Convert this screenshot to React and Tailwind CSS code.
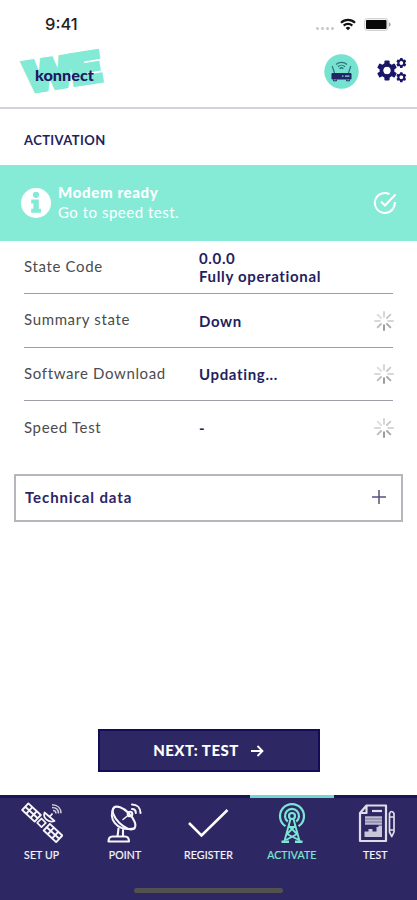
import React from "react";

function Logo() {
  return (
    <svg className="block overflow-visible" width="90" height="56" viewBox="0 0 90 56">
      <g fill="#83ead6" stroke="#83ead6" strokeWidth="3.500" fontFamily="Inter, sans-serif" fontWeight="900" fontSize="42">
        <text transform="translate(8 45) rotate(-9)" textLength="51" lengthAdjust="spacingAndGlyphs">W</text>
        <text transform="translate(55 37.500) rotate(-9)" textLength="31" lengthAdjust="spacingAndGlyphs">E</text>
      </g>
      <text x="17" y="32.500" fill="#1c1760" fontFamily="Lato, sans-serif" fontWeight="900" fontSize="15" textLength="59" lengthAdjust="spacingAndGlyphs">konnect</text>
    </svg>
  );
}

function Wifi() {
  return (
    <svg width="16" height="13" viewBox="0 0 16 13" fill="none" stroke="#111" strokeWidth="2.2">
      <path d="M1 4.700a10 10 0 0 1 14 0M3.700 7.600a6.200 6.200 0 0 1 8.600 0" />
      <path d="M8 12.300 5.600 9.900a3.400 3.400 0 0 1 4.800 0z" fill="#111" stroke="none" />
    </svg>
  );
}

function Battery() {
  return (
    <svg width="27" height="13" viewBox="0 0 27 13">
      <rect x=".5" y=".5" width="23.500" height="12" rx="3" fill="#f4f4f4" stroke="#d0d0d0" />
      <rect x="2" y="2" width="20.500" height="9" rx="1" fill="#080808" />
      <path d="M25 4.500c2 .6 2 3.400 0 4z" fill="#999" />
    </svg>
  );
}

function Router() {
  return (
    <svg width="35" height="35" viewBox="0 0 35 35" fill="none">
      <circle cx="17.500" cy="17.500" r="17.200" fill="#75e3d0" />
      <rect x="7.500" y="19" width="20" height="6.500" rx="1.200" fill="#252466" />
      <path d="M9.500 25.500v1.300h3v-1.300M22.500 25.500v1.300h3v-1.300" stroke="#252466" />
      <path d="M18 22.200h1.500M21 22.200h4.500" stroke="#75e3d0" strokeWidth="1.300" />
      <path d="M10.500 19 8.200 12M24.500 19l2.300-7M12 10.500a8 8 0 0 1 11 0M13.900 12.700a5.200 5.200 0 0 1 7.200 0M15.600 14.700a2.700 2.700 0 0 1 3.800 0" stroke="#2f7280" strokeWidth="1.200" />
    </svg>
  );
}

function Gear({ x, y, s, hole }) {
  return (
    <g transform={`translate(${x} ${y}) scale(${s})`}>
      {[0, 60, 120, 180, 240, 300].map((a) => (
        <rect key={a} x="-2.600" y="-10" width="5.200" height="6" rx="1" fill="#191568" transform={`rotate(${a})`} />
      ))}
      <circle r={hole + 1.800} fill="none" stroke="#191568" strokeWidth="3.800" />
    </g>
  );
}

function Gears() {
  return (
    <svg className="-mt-[3px]" width="30" height="26" viewBox="0 0 30 26">
      <Gear x={10} y={13.500} s={1} hole={3.800} />
      <Gear x={24.300} y={6} s={0.5} hole={4.200} />
      <Gear x={24.300} y={20.300} s={0.5} hole={4.200} />
    </svg>
  );
}

function Spinner() {
  const shades = ["#d4d4d4", "#c9c9c9", "#d6d6d6", "#a9a9a9", "#989898", "#bdbdbd", "#d8d8d8", "#dedede"];
  return (
    <svg className="-mr-[1px] block" width="20" height="20" viewBox="-10 -10 20 20">
      {shades.map((c, i) => (
        <path key={i} d="M0-4.200V-9" stroke={c} strokeWidth="1.900" strokeLinecap="round" transform={`rotate(${i * 45})`} />
      ))}
    </svg>
  );
}

function InfoIcon() {
  return (
    <svg className="block" width="30" height="30" viewBox="0 0 30 30">
      <circle cx="15" cy="15" r="15" fill="#fff" />
      <circle cx="15" cy="6.800" r="3.100" fill="#83ead6" />
      <path d="M10.200 11.500h7.600v9.300h2.200v3.900H10.200v-3.900h2.200v-5.400h-2.200z" fill="#83ead6" />
    </svg>
  );
}

function CheckCircle() {
  return (
    <svg className="block" width="24" height="24" viewBox="0 0 24 24" fill="none" stroke="#fff" strokeWidth="2">
      <path d="M16.500 3.100A10 10 0 1 0 21.800 11" />
      <path d="m8 10.500 4 4L22.500 3.500" />
    </svg>
  );
}

function Panel({ x, y }) {
  return (
    <g transform={`translate(${x} ${y}) rotate(43)`} strokeWidth="1.900">
      <path d="M-8.500-4.500h17v9h-17zM-8.500 0h17M-3-4.500v9M3-4.500v9" />
    </g>
  );
}

function Satellite() {
  return (
    <svg width="42" height="42" viewBox="0 0 42 42" fill="none" stroke="#f5f5fa" strokeWidth="1.700" strokeLinejoin="round">
      <Panel x={10.500} y={10.500} />
      <Panel x={32} y={31} />
      <path d="m20.500 16.500 4.300 4.300-4.300 4.300-4.300-4.300z" />
      <path d="M23.500 10.500c-2 6 4.500 10.500 10 8.500zM28.500 15l3-3.500" />
      <path d="M32 8.500c2 0 3 1.300 3 3M31 5.500c4.300 0 6.500 2.500 6.500 6M31 2.800c5.700 0 9 3.600 9 8.500" strokeWidth="1.600" stroke="#c9c7d8" />
    </svg>
  );
}

function Dish() {
  return (
    <svg width="42" height="42" viewBox="0 0 42 42" fill="none" stroke="#f5f5fa" strokeWidth="2.100" strokeLinejoin="round" strokeLinecap="round">
      <path d="M10 5.500C3.500 16 12 29.500 30.500 26.500" />
      <ellipse cx="20" cy="16" rx="14.500" ry="6.800" transform="rotate(45 20 16)" />
      <path d="m19 17.500 5-4" strokeWidth="1.500" />
      <circle cx="26" cy="12" r="2.300" />
      <path d="M28 7c2.500 0 3.800 1.700 3.800 4M28 2.500c5.200 0 8.500 3.500 8.500 8.500" />
      <path d="m14.500 26.500-1 8M19 28v6.500M4.500 39.500c0-3.200 1.500-5 4-5H21c2.500 0 4 1.800 4 5z" />
    </svg>
  );
}

function Check() {
  return (
    <svg width="42" height="42" viewBox="0 0 42 42" fill="none" stroke="#fff" strokeWidth="2.500">
      <path d="m2 21 12.500 12.500L40.500 8" />
    </svg>
  );
}

function Tower() {
  return (
    <svg width="42" height="42" viewBox="0 0 42 42" fill="none" stroke="#7ce5d4" strokeWidth="2.200">
      <circle cx="21" cy="14" r="3" />
      <path d="M16.800 19.500a7 7 0 1 1 8.400 0M14.500 24.200a12 12 0 1 1 13 0" />
      <path d="m19.500 17-6 22M22.500 17l6 22M17.500 25h7M18 24l8 8-11 6M24 24l-8 8 12 6" strokeWidth="1.900" />
      <path d="M10.500 39.700h7.500M24 39.700h7.500" strokeWidth="2.600" />
    </svg>
  );
}

function Report() {
  return (
    <svg width="42" height="42" viewBox="0 0 42 42" fill="none" stroke="#dddce8" strokeWidth="2.200" strokeLinejoin="round">
      <path d="M12.500 3.500H32V39H6V11zM12.500 3.500V11H6" />
      <path d="M18 9h10" />
      <path d="M11 15.500h17M11 18.500h17M11 21.500h17" strokeWidth="2.300" stroke="#bbb9ce" />
      <path d="M10.500 35V29.500h4V27h4v2.500h4V25h2v-1.500h3.500V35z" fill="#c8c6d8" stroke="none" />
      <path d="M35.500 11.500q2-4 4.500 0V30l-2.200 4.500-2.300-4.500zM35.500 15H40M35.500 28H40" strokeWidth="1.700" />
    </svg>
  );
}

function Row({ label, children, loading, className }) {
  return (
    <div className={`flex items-center border-[#9f9da9] ${className}`}>
      <div className="-mt-[2px] w-[175px] whitespace-nowrap text-[15px] tracking-[0.65px] text-[#4b4b50]">{label}</div>
      <div className="flex-1 whitespace-nowrap text-[15px] font-bold leading-[18px] tracking-[0.65px] text-[#241e60]">{children}</div>
      {loading && <Spinner />}
    </div>
  );
}

function NavItem({ icon, label, active }) {
  return (
    <div className={`flex w-1/5 flex-col items-center border-t-[3px] pt-[4px] text-[10.500px] ${active ? "border-[#6fd9ce] text-[#7ce5d4]" : "border-[#1b1656] text-[#f5f5fa]"}`}>
      {icon}
      <span className="mt-[4px] whitespace-nowrap leading-[14px] tracking-[0.15px] [-webkit-text-stroke:0.2px_currentColor]">{label}</span>
    </div>
  );
}

export default function App() {
  return (
    <div className="flex h-[900px] w-[417px] flex-col overflow-hidden bg-white font-['Lato',sans-serif]">
      <header className="h-[109px] shrink-0 border-b-2 border-[#d3d2da]">
        <div className="flex h-12 items-center justify-between pl-[45px] pr-[26px]">
          <span className="font-['Inter',sans-serif] text-[16.500px] font-medium text-[#222]">9:41</span>
          <div className="flex items-center">
            <div className="mr-[6px] mt-[9px] flex gap-[2px]">
              {[0, 1, 2, 3].map((n) => <i key={n} className="size-[3px] rounded-full bg-[#c8c8c8]" />)}
            </div>
            <Wifi />
            <div className="ml-[8px]"><Battery /></div>
          </div>
        </div>
        <div className="flex items-start justify-between pl-[18px] pr-[10px]">
          <Logo />
          <div className="mt-[6px] flex items-center gap-[18px]">
            <Router />
            <Gears />
          </div>
        </div>
      </header>
      <h1 className="flex h-[56px] shrink-0 items-center pl-6 pt-[7px] text-[13px] font-bold tracking-[0.4px] text-[#241e60]">ACTIVATION</h1>
      <section className="flex h-[76px] shrink-0 items-center bg-[#85ebd7] pl-[21px] pr-[20px] text-white">
        <InfoIcon />
        <div className="-mt-[3px] ml-[7px] flex-1 text-[15px] leading-[20px]">
          <div className="font-black tracking-[0.65px]">Modem ready</div>
          <div className="tracking-[0.5px]">Go to speed test.</div>
        </div>
        <CheckCircle />
      </section>
      <section className="px-6">
        <Row label="State Code" className="h-[53px] border-b">0.0.0<br />Fully operational</Row>
        <Row label="Summary state" loading className="h-[54px] border-b">Down</Row>
        <Row label="Software Download" loading className="h-[53px] border-b">Updating...</Row>
        <Row label="Speed Test" loading className="h-[54px]">-</Row>
      </section>
      <button className="mx-[14px] mt-[19px] flex h-[48px] shrink-0 items-center justify-between border-2 border-[#b7b6bc] pb-[2px] pl-[9px] pr-[15px] text-[15px] font-bold text-[#2b2665]">
        <span className="tracking-[0.9px]">Technical data</span>
        <svg width="14" height="14" viewBox="0 0 14 14" stroke="#55517f" strokeWidth="1.500"><path d="M7 0v14M0 7h14" /></svg>
      </button>
      <button className="mx-auto mt-auto flex h-[43px] w-[222px] shrink-0 items-center justify-center gap-[12px] border-2 border-[#130c58] bg-[#2d2864] text-[15px] font-black text-white">
        <span className="tracking-[0.5px]">NEXT: TEST</span>
        <svg width="13" height="12" viewBox="0 0 13 12" fill="none" stroke="#fff" strokeWidth="1.800"><path d="M0 6h11.500M6.500 1l5 5-5 5" /></svg>
      </button>
      <nav className="mt-[23px] h-[105px] shrink-0 bg-[#2d2864]">
        <div className="flex h-[93px]">
          <NavItem icon={<Satellite />} label="SET UP" />
          <NavItem icon={<Dish />} label="POINT" />
          <NavItem icon={<Check />} label="REGISTER" />
          <NavItem icon={<Tower />} label="ACTIVATE" active />
          <NavItem icon={<Report />} label="TEST" />
        </div>
        <div className="mx-auto h-[5px] w-[149px] rounded-full bg-[#52514f]" />
      </nav>
    </div>
  );
}
